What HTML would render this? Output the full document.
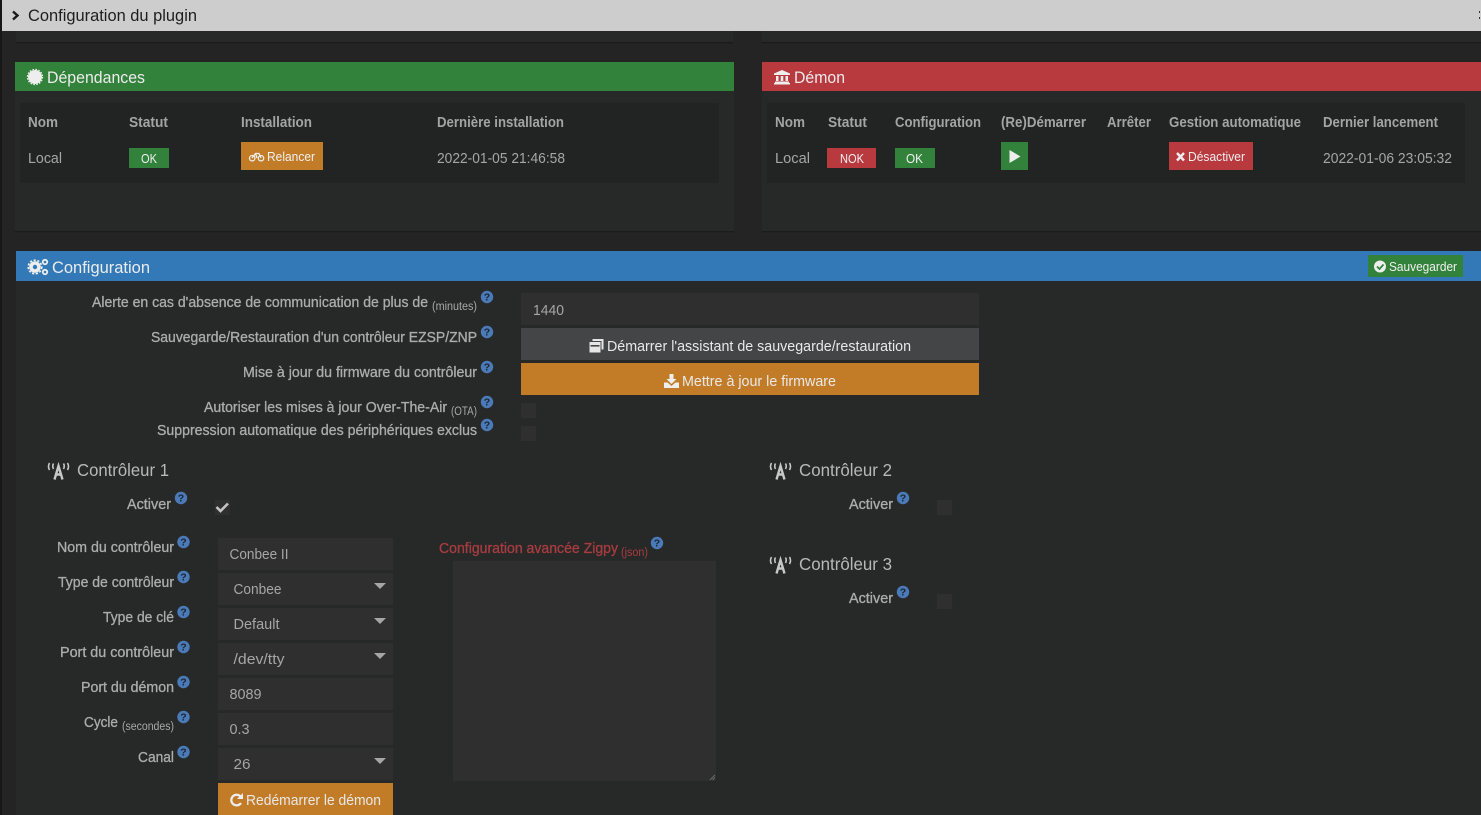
<!DOCTYPE html>
<html><head><meta charset="utf-8"><title>Configuration du plugin</title>
<style>
html,body{margin:0;padding:0;background:#242424;width:1481px;height:815px;overflow:hidden}
svg{display:block;font-family:"Liberation Sans",sans-serif}
.h{font-size:14.5px;font-weight:700;fill:#a4a4a4}
.v{font-size:14.5px;fill:#a6a6a6}
.l{font-size:14.5px;fill:#acacac;stroke:#acacac;stroke-width:.3}
.s{font-size:11.5px;fill:#a8a8a8}
.t{font-size:16.5px;fill:#ececec}
.w{font-size:12.5px;fill:#f0f0f0}
.c{font-size:17.5px;fill:#b8b8b8}
.b{font-size:14.5px;fill:#e8e8e8}
.q{font-size:10.5px;font-weight:700;fill:#1e2630;text-anchor:middle}
</style></head><body>
<svg width="1481" height="815" viewBox="0 0 1481 815" xmlns="http://www.w3.org/2000/svg">
<defs>
<g id="hp"><circle r="6.2" fill="#4a7ab8"/><text class="q" y="3.7">?</text></g>
<g id="ant" fill="none" stroke="#c8c8c8" stroke-width="1.6">
<path d="M7.5 17.5 L11.5 4 L15.5 17.5 M8.5 12.5 H14.5" stroke-width="2.4"/>
<path d="M2.5 1 Q0.5 4.5 2.5 8 M6.5 1.5 Q5 4 6.5 7 M16.5 1.5 Q18 4 16.5 7 M20.5 1 Q22.5 4.5 20.5 8"/>
</g>
<path id="ar" d="M0 0H12L6 6Z" fill="#a6a6a6"/>
</defs>

<rect width="1481" height="815" fill="#242424"/>
<rect width="2" height="815" fill="#171717"/>

<!-- top remnants -->
<rect x="16" y="31" width="717" height="11" fill="#272928"/>
<rect x="16" y="42" width="717" height="1.5" fill="#1b1b1b"/>
<rect x="762" y="31" width="719" height="11" fill="#272928"/>
<rect x="762" y="42" width="719" height="1.5" fill="#1b1b1b"/>

<!-- top bar -->
<rect x="2" width="1479" height="31" fill="#cdcdcd"/>
<path d="M13 11.5L17.5 15.5L13 19.5" fill="none" stroke="#1a1a1a" stroke-width="2.4"/>
<text x="28" y="21" font-size="16.5" fill="#1e1e1e" textLength="169" lengthAdjust="spacingAndGlyphs">Configuration du plugin</text>
<rect x="1479" y="11" width="1" height="2" fill="#333"/><rect x="1479" y="17" width="1" height="2" fill="#333"/>

<!-- Dependances -->
<rect x="15" y="62" width="719" height="29" fill="#32823b"/>
<rect x="15" y="91" width="719" height="140" fill="#272928"/>
<rect x="15" y="231" width="719" height="1.5" fill="#1b1b1b"/>
<circle cx="35" cy="77" r="7" fill="#eee"/><circle cx="35" cy="77" r="7.6" fill="none" stroke="#eee" stroke-width="1.2" stroke-dasharray="1.6 1.4"/>
<text class="t" x="47" y="83" textLength="98" lengthAdjust="spacingAndGlyphs">Dépendances</text>
<rect x="20" y="103" width="699" height="80" fill="#222323"/>
<text class="h" x="28" y="127" textLength="30" lengthAdjust="spacingAndGlyphs">Nom</text>
<text class="h" x="129" y="127" textLength="39" lengthAdjust="spacingAndGlyphs">Statut</text>
<text class="h" x="241" y="127" textLength="71" lengthAdjust="spacingAndGlyphs">Installation</text>
<text class="h" x="437" y="127" textLength="127" lengthAdjust="spacingAndGlyphs">Dernière installation</text>
<text class="v" x="28" y="163" textLength="34" lengthAdjust="spacingAndGlyphs">Local</text>
<rect x="129" y="148" width="40" height="20" fill="#32823b"/>
<text class="w" x="141" y="163" textLength="16" lengthAdjust="spacingAndGlyphs">OK</text>
<rect x="241" y="142" width="82" height="28" fill="#c27c28"/>
<g fill="none" stroke="#eee" stroke-width="1.3"><circle cx="252.2" cy="158.2" r="2.7"/><circle cx="261" cy="158.2" r="2.7"/><path d="M252 158L255.5 153.5H259L261 158M255.5 153.5L257 158"/></g>
<text class="w" x="267" y="161" textLength="48" lengthAdjust="spacingAndGlyphs">Relancer</text>
<text class="v" x="437" y="163" textLength="128" lengthAdjust="spacingAndGlyphs">2022-01-05 21:46:58</text>

<!-- Demon -->
<rect x="762" y="62" width="719" height="29" fill="#b8393e"/>
<rect x="762" y="91" width="719" height="140" fill="#272928"/>
<rect x="762" y="231" width="719" height="1.5" fill="#1b1b1b"/>
<path d="M782 70L790 73.5V75H774V73.5ZM775 81.5H789V83H775ZM774 83H790V84.5H774ZM776 76H778.5V81H776ZM780.7 76H783.3V81H780.7ZM785.5 76H788V81H785.5Z" fill="#eee"/>
<text class="t" x="794" y="83" textLength="51" lengthAdjust="spacingAndGlyphs">Démon</text>
<rect x="767" y="103" width="698" height="80" fill="#222323"/>
<text class="h" x="775" y="127" textLength="30" lengthAdjust="spacingAndGlyphs">Nom</text>
<text class="h" x="828" y="127" textLength="39" lengthAdjust="spacingAndGlyphs">Statut</text>
<text class="h" x="895" y="127" textLength="86" lengthAdjust="spacingAndGlyphs">Configuration</text>
<text class="h" x="1001" y="127" textLength="85" lengthAdjust="spacingAndGlyphs">(Re)Démarrer</text>
<text class="h" x="1107" y="127" textLength="44" lengthAdjust="spacingAndGlyphs">Arrêter</text>
<text class="h" x="1169" y="127" textLength="132" lengthAdjust="spacingAndGlyphs">Gestion automatique</text>
<text class="h" x="1323" y="127" textLength="115" lengthAdjust="spacingAndGlyphs">Dernier lancement</text>
<text class="v" x="775" y="163" textLength="35" lengthAdjust="spacingAndGlyphs">Local</text>
<rect x="827" y="148" width="49" height="20" fill="#b8393e"/>
<text class="w" x="840" y="163" textLength="24" lengthAdjust="spacingAndGlyphs">NOK</text>
<rect x="895" y="148" width="40" height="20" fill="#32823b"/>
<text class="w" x="906" y="163" textLength="17" lengthAdjust="spacingAndGlyphs">OK</text>
<rect x="1001" y="142" width="27" height="28" fill="#32823b"/>
<path d="M1009.5 150L1020.5 156.5L1009.5 163Z" fill="#eee"/>
<rect x="1169" y="142" width="84" height="28" fill="#b8393e"/>
<path d="M1177 153L1184 160.5M1184 153L1177 160.5" stroke="#eee" stroke-width="2.5"/>
<text class="w" x="1188" y="161" textLength="57" lengthAdjust="spacingAndGlyphs">Désactiver</text>
<text class="v" x="1323" y="163" textLength="129" lengthAdjust="spacingAndGlyphs">2022-01-06 23:05:32</text>

<!-- Configuration -->
<rect x="16" y="251" width="1465" height="30" fill="#3379b7"/>
<rect x="16" y="281" width="1465" height="534" fill="#272928"/>
<circle cx="35" cy="267" r="4" fill="none" stroke="#eee" stroke-width="3.6"/><circle cx="35" cy="267" r="6.8" fill="none" stroke="#eee" stroke-width="1.6" stroke-dasharray="2.2 1.6"/>
<circle cx="45" cy="262" r="2.2" fill="none" stroke="#eee" stroke-width="1.8"/><circle cx="45" cy="272" r="2.2" fill="none" stroke="#eee" stroke-width="1.8"/>
<text class="t" x="52" y="273" textLength="98" lengthAdjust="spacingAndGlyphs">Configuration</text>
<rect x="1368" y="255" width="95" height="22" fill="#32823b"/>
<circle cx="1380" cy="266.5" r="6" fill="#eee"/><path d="M1377 266.5L1379.5 269L1383.5 264.5" fill="none" stroke="#32823b" stroke-width="1.7"/>
<text class="w" x="1389" y="271" textLength="68" lengthAdjust="spacingAndGlyphs">Sauvegarder</text>

<text class="l" x="92" y="307" textLength="336" lengthAdjust="spacingAndGlyphs">Alerte en cas d'absence de communication de plus de</text>
<text class="s" x="432" y="310" textLength="45" lengthAdjust="spacingAndGlyphs">(minutes)</text>
<text class="l" x="151" y="342" textLength="326" lengthAdjust="spacingAndGlyphs">Sauvegarde/Restauration d'un contrôleur EZSP/ZNP</text>
<text class="l" x="243" y="377" textLength="234" lengthAdjust="spacingAndGlyphs">Mise à jour du firmware du contrôleur</text>
<text class="l" x="204" y="412" textLength="243" lengthAdjust="spacingAndGlyphs">Autoriser les mises à jour Over-The-Air</text>
<text class="s" x="451" y="415" textLength="26" lengthAdjust="spacingAndGlyphs">(OTA)</text>
<text class="l" x="157" y="435" textLength="320" lengthAdjust="spacingAndGlyphs">Suppression automatique des périphériques exclus</text>
<use href="#hp" x="487" y="297"/><use href="#hp" x="487" y="332"/><use href="#hp" x="487" y="367"/><use href="#hp" x="487" y="402"/><use href="#hp" x="487" y="425"/>

<rect x="521" y="293" width="458" height="32" fill="#2f2f2f"/>
<text class="v" x="533" y="315" textLength="31" lengthAdjust="spacingAndGlyphs">1440</text>
<rect x="521" y="328" width="458" height="32" fill="#444547"/>
<path d="M592.5 339H603.5V349.5H601.5V341H592.5Z" fill="#e6e6e6"/>
<path d="M589.5 342H600.5V352.5H589.5Z" fill="#e6e6e6"/><rect x="590.5" y="345" width="9" height="1.6" fill="#444547"/>
<text class="b" x="607" y="351" textLength="304" lengthAdjust="spacingAndGlyphs">Démarrer l'assistant de sauvegarde/restauration</text>
<rect x="521" y="363" width="458" height="32" fill="#c27c28"/>
<path d="M669.5 374H673.5V379H676.5L671.5 384L666.5 379H669.5Z M664 382.5H667.5L671.5 386L675.5 382.5H679V388H664Z" fill="#eee"/>
<text class="b" x="682" y="386" textLength="154" lengthAdjust="spacingAndGlyphs">Mettre à jour le firmware</text>
<rect x="521" y="403" width="15" height="15" fill="#2f2f2f"/>
<rect x="521" y="426" width="15" height="15" fill="#2f2f2f"/>

<!-- Controleur 1 -->
<use href="#ant" x="47" y="462"/>
<text class="c" x="77" y="476" textLength="92" lengthAdjust="spacingAndGlyphs">Contrôleur 1</text>
<text class="l" x="127" y="509" textLength="44" lengthAdjust="spacingAndGlyphs">Activer</text>
<use href="#hp" x="181" y="498"/>
<rect x="215" y="500" width="15" height="15" fill="#2f2f2f"/>
<path d="M216.5 507L220.5 511L228 503.5" fill="none" stroke="#c4c4c4" stroke-width="2.6"/>

<text class="l" x="57" y="552" textLength="117" lengthAdjust="spacingAndGlyphs">Nom du contrôleur</text>
<text class="l" x="58" y="587" textLength="116" lengthAdjust="spacingAndGlyphs">Type de contrôleur</text>
<text class="l" x="103" y="622" textLength="71" lengthAdjust="spacingAndGlyphs">Type de clé</text>
<text class="l" x="60" y="657" textLength="114" lengthAdjust="spacingAndGlyphs">Port du contrôleur</text>
<text class="l" x="81" y="692" textLength="93" lengthAdjust="spacingAndGlyphs">Port du démon</text>
<text class="l" x="84" y="727" textLength="34" lengthAdjust="spacingAndGlyphs">Cycle</text>
<text class="s" x="122" y="730" textLength="52" lengthAdjust="spacingAndGlyphs">(secondes)</text>
<text class="l" x="138" y="762" textLength="36" lengthAdjust="spacingAndGlyphs">Canal</text>
<use href="#hp" x="183.5" y="542"/><use href="#hp" x="183.5" y="577"/><use href="#hp" x="183.5" y="612"/><use href="#hp" x="183.5" y="647"/><use href="#hp" x="183.5" y="682"/><use href="#hp" x="183.5" y="717"/><use href="#hp" x="183.5" y="752"/>

<g fill="#2f2f2f"><rect x="218" y="538" width="175" height="32"/><rect x="218" y="573" width="175" height="32"/><rect x="218" y="608" width="175" height="32"/><rect x="218" y="643" width="175" height="32"/><rect x="218" y="678" width="175" height="32"/><rect x="218" y="713" width="175" height="32"/><rect x="218" y="748" width="175" height="32"/></g>
<text class="v" x="229.500" y="559" textLength="59" lengthAdjust="spacingAndGlyphs">Conbee II</text>
<text class="v" x="233.500" y="594" textLength="48" lengthAdjust="spacingAndGlyphs">Conbee</text>
<text class="v" x="233.500" y="629" textLength="46" lengthAdjust="spacingAndGlyphs">Default</text>
<text class="v" x="233.500" y="664" textLength="51" lengthAdjust="spacingAndGlyphs">/dev/tty</text>
<text class="v" x="229.500" y="699" textLength="32" lengthAdjust="spacingAndGlyphs">8089</text>
<text class="v" x="229.500" y="734" textLength="20" lengthAdjust="spacingAndGlyphs">0.3</text>
<text class="v" x="233.500" y="769" textLength="17" lengthAdjust="spacingAndGlyphs">26</text>
<use href="#ar" x="374" y="583"/><use href="#ar" x="374" y="618"/><use href="#ar" x="374" y="653"/><use href="#ar" x="374" y="758"/>
<rect x="218" y="783" width="175" height="32" fill="#c27c28"/>
<path d="M240.5 796.5A5.3 5.3 0 1 0 241 803" fill="none" stroke="#eee" stroke-width="2.2"/><path d="M243 793V799H237Z" fill="#eee"/>
<text class="b" x="246" y="805" textLength="135" lengthAdjust="spacingAndGlyphs">Redémarrer le démon</text>

<text x="439" y="553" font-size="14.5" fill="#a83c40" stroke="#a83c40" stroke-width=".3" textLength="179" lengthAdjust="spacingAndGlyphs">Configuration avancée Zigpy</text>
<text x="621" y="556" font-size="11.5" fill="#a83c40" textLength="27" lengthAdjust="spacingAndGlyphs">(json)</text>
<use href="#hp" x="657" y="543"/>
<rect x="453" y="561" width="263" height="220" fill="#2f2f2f"/>
<path d="M710 780L715 775M712.500 780L715 777.500" stroke="#6a6a6a" stroke-width="1"/>

<!-- Controleur 2/3 -->
<use href="#ant" x="769" y="462"/>
<text class="c" x="799" y="476" textLength="93" lengthAdjust="spacingAndGlyphs">Contrôleur 2</text>
<text class="l" x="849" y="509" textLength="44" lengthAdjust="spacingAndGlyphs">Activer</text>
<use href="#hp" x="903" y="498"/>
<rect x="937" y="500" width="15" height="15" fill="#2f2f2f"/>
<use href="#ant" x="769" y="556"/>
<text class="c" x="799" y="570" textLength="93" lengthAdjust="spacingAndGlyphs">Contrôleur 3</text>
<text class="l" x="849" y="603" textLength="44" lengthAdjust="spacingAndGlyphs">Activer</text>
<use href="#hp" x="903" y="592"/>
<rect x="937" y="594" width="15" height="15" fill="#2f2f2f"/>
</svg>
</body></html>
